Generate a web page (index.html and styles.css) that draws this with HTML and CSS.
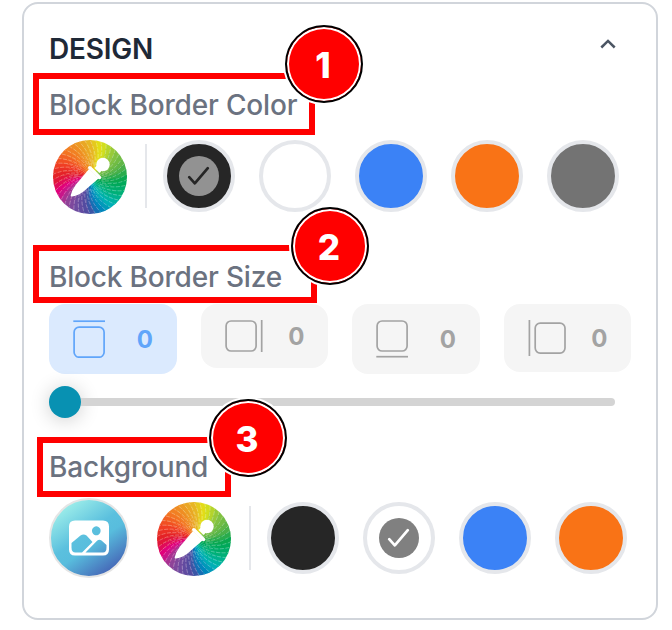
FILE: index.html
```html
<!DOCTYPE html>
<html lang="en">
<head>
<meta charset="utf-8">
<title>Design</title>
<link rel="stylesheet" href="styles.css">
</head>
<body>
<svg class="defs" aria-hidden="true">
  <symbol id="pipette" viewBox="0 0 74 74">
    <g fill="#fff">
      <circle cx="50" cy="24.500" r="6.700"/>
      <path d="M44 25.500L49 30.500L46.500 33L41.500 28Z"/>
      <path d="M36.800 27.800L46.500 37.500" stroke="#fff" stroke-width="3.500" stroke-linecap="round"/>
      <path d="M36 29L45.500 38.500L30.500 51.500Q24.500 56 18.600 56.600Q17.400 56.600 17.700 55.300Q19 49.500 23 44.500Z"/>
    </g>
  </symbol>
  <symbol id="check" viewBox="0 0 40 40">
    <path d="M10.200 21.200L15.800 27.300L28.800 12.200" fill="none" stroke="currentColor" stroke-width="2.700" stroke-linecap="round" stroke-linejoin="round"/>
  </symbol>
</svg>

<main class="card">
  <header class="header">
    <h2 class="title">DESIGN</h2>
    <svg class="chevron" viewBox="0 0 16 10"><path d="M1.300 8.500L8 1.900L14.700 8.500" fill="none" stroke="#4b5563" stroke-width="2.500"/></svg>
  </header>

  <div class="label label-color">Block Border Color</div>
  <div class="row row-color">
    <svg class="wheel" viewBox="0 0 74 74"><g class="rays"></g><use href="#pipette"/></svg>
    <span class="divider"></span>
    <div class="swatches">
      <span class="swatch black"><svg class="tick tick-dark"><use href="#check"/></svg></span>
      <span class="swatch white"></span>
      <span class="swatch blue"></span>
      <span class="swatch orange"></span>
      <span class="swatch gray"></span>
    </div>
  </div>

  <div class="label label-size">Block Border Size</div>
  <div class="tiles">
    <div class="tile active">
      <svg width="32" height="38" viewBox="0 0 32 38" fill="none" stroke="currentColor" stroke-width="1.700"><path d="M.3 1.200H32"/><rect x="1.100" y="7.200" width="30" height="30" rx="5"/></svg>
      <span>0</span>
    </div>
    <div class="tile">
      <svg width="38" height="32" viewBox="0 0 38 32" fill="none" stroke="currentColor" stroke-width="1.700"><path d="M36.700 0V32"/><rect x="1.100" y="1" width="30" height="30" rx="5"/></svg>
      <span>0</span>
    </div>
    <div class="tile">
      <svg width="32" height="38" viewBox="0 0 32 38" fill="none" stroke="currentColor" stroke-width="1.700"><path d="M.3 36.700H32"/><rect x="1.100" y="1" width="30" height="30" rx="5"/></svg>
      <span>0</span>
    </div>
    <div class="tile">
      <svg width="38" height="36" viewBox="0 0 38 36" fill="none" stroke="currentColor" stroke-width="1.700"><path d="M1.400 0V36"/><rect x="7.200" y="3.100" width="29.800" height="30" rx="5"/></svg>
      <span>0</span>
    </div>
  </div>

  <div class="slider"><span class="thumb"></span><span class="track"></span></div>

  <div class="label label-bg">Background</div>
  <div class="row row-bg">
    <span class="image-button">
      <svg width="40" height="36" viewBox="0 0 40 36">
        <path fill="#fff" fill-rule="evenodd" d="M6 .5H34Q40 .5 40 6.500V29.500Q40 35.500 34 35.500H6Q0 35.500 0 29.500V6.500Q0 .5 6 .5ZM27.300 6.300A4.300 4.500 0 1 0 27.310 6.300ZM2.500 23V27.500Q2.500 32.500 6.500 32.500H13L23.500 22L17.500 15.500Q14.500 13.300 11.500 15.500ZM16.500 32.500H34Q37.500 32.500 37.500 27.500V25L32.500 20.500Q30.300 19 28.300 20.500Z"/>
      </svg>
    </span>
    <svg class="wheel wheel-bg" viewBox="0 0 74 74"><g class="rays"></g><use href="#pipette"/></svg>
    <span class="divider"></span>
    <div class="swatches">
      <span class="swatch black"></span>
      <span class="swatch white"><svg class="tick tick-light"><use href="#check"/></svg></span>
      <span class="swatch blue"></span>
      <span class="swatch orange"></span>
    </div>
  </div>
</main>

<div class="frame frame-1"></div>
<div class="frame frame-2"></div>
<div class="frame frame-3"></div>
<div class="badge badge-1">1</div>
<div class="badge badge-2">2</div>
<div class="badge badge-3">3</div>
<script src="wheel.js"></script>
</body>
</html>
```
FILE: styles.css
```css
* { box-sizing: border-box; }
body {
  margin: 0;
  height: 630px;
  padding: 2px 14px 10px 22px;
  position: relative;
  overflow: hidden;
  background: #fff;
  font-family: Inter, "Liberation Sans", sans-serif;
}
.defs { position: absolute; width: 0; height: 0; }
.card {
  height: 618px;
  border: 2px solid #d1d5db;
  border-radius: 16px;
  padding: 24px 25px 0;
}
.header { display: flex; align-items: center; justify-content: space-between; height: 40px; }
.title { margin: 0; padding-top: 2px; font-size: 28px; line-height: 40px; font-weight: 600; letter-spacing: -.2px; color: #1f2937; }
.chevron { width: 16px; height: 10px; margin: 0 15px 9px 0; }
.label { height: 40px; font-size: 28px; line-height: 42px; font-weight: 500; letter-spacing: -.18px; color: #6b7280; white-space: nowrap; }
.label-color { margin-top: 16px; }
.label-size { margin-top: 42px; }
.label-bg { margin-top: 28px; }
.row { display: flex; align-items: center; }
.row-color { height: 76px; margin-top: 14px; padding-left: 4px; }
.row-bg { height: 80px; margin-top: 12px; }
.wheel { flex: none; width: 74px; height: 74px; margin-top: 2px; border-radius: 50%; }
.wheel-bg { margin-left: 28px; }
.divider { flex: none; width: 2px; height: 64px; margin: 0 16px 0 18px; background: #e5e7eb; }
.swatches { display: flex; gap: 24px; }
.swatch {
  flex: none;
  display: flex;
  align-items: center;
  justify-content: center;
  width: 72px;
  height: 72px;
  border: 4px solid #e5e7eb;
  border-radius: 50%;
}
.black { background-color: #262626; }
.white { background-color: #fff; }
.blue { background-color: #3b82f6; }
.orange { background-color: #f97316; }
.gray { background-color: #737373; }
.tick { width: 40px; height: 40px; border-radius: 50%; }
.tick-dark { background: #929292; color: #262626; }
.tick-light { background: #808080; color: #fff; }
.tiles { display: flex; align-items: flex-start; gap: 24px; margin-top: 8px; width: 582px; }
.tile {
  display: flex;
  flex: 1;
  align-items: center;
  justify-content: space-between;
  padding: 16px 24px;
  border-radius: 16px;
  background: #f5f5f5;
  color: #a3a3a3;
  font-size: 24px;
  line-height: 30px;
  font-weight: 700;
}
.tile span { height: 28px; letter-spacing: -.5px; }
.active { background: #dbeafe; color: #60a5fa; }
.slider { display: flex; align-items: center; width: 566px; height: 32px; margin-top: 12px; }
.thumb { flex: none; width: 32px; height: 32px; border-radius: 50%; background: #0891b2; box-shadow: 0 2px 20px rgba(0, 0, 0, .2); }
.track { flex: 1; height: 8px; border-radius: 0 4px 4px 0; background: #d4d4d4; }
.image-button {
  flex: none;
  display: flex;
  align-items: center;
  justify-content: center;
  width: 80px;
  height: 80px;
  border: 2px solid #e5e5e5;
  border-radius: 50%;
  background: linear-gradient(145deg, #a5f3eb 8%, #5bc0de 45%, #58bddd 57%, #4460b4 90%);
}
.frame { position: absolute; border: 6px solid #f00; }
.frame-1 { left: 33px; top: 73px; width: 282px; height: 62px; }
.frame-2 { left: 33px; top: 245px; width: 284px; height: 58px; }
.frame-3 { left: 37px; top: 437px; width: 194px; height: 60px; }
.badge {
  position: absolute;
  width: 78px;
  height: 78px;
  border: 2px solid #000;
  border-radius: 50%;
  background: #f00;
  box-shadow: inset 0 0 0 2px #fff, 0 0 0 2px #fff;
  color: #fff;
  font-size: 35px;
  font-weight: 800;
  line-height: 76px;
  text-align: center;
  padding-right: 2px;
}
.badge-1 { left: 285px; top: 25px; }
.badge-2 { left: 291px; top: 207px; }
.badge-3 { left: 209px; top: 399px; }
```
FILE: wheel.js
```js
// Clockwise hue stops, starting at twelve o'clock.
const stops = [
  [0, 232, 178, 36], [22, 226, 228, 20], [48, 140, 198, 63], [75, 86, 178, 72],
  [98, 0, 166, 80], [122, 0, 176, 120], [145, 0, 180, 180], [168, 0, 125, 190],
  [185, 75, 75, 160], [210, 115, 75, 160], [228, 150, 65, 150], [248, 224, 0, 130],
  [272, 225, 28, 40], [292, 240, 60, 36], [318, 243, 115, 34], [342, 238, 150, 36],
  [360, 232, 178, 36]
];
const colorAt = a => {
  let i = 0;
  while (stops[i + 1][0] < a) i++;
  const p = stops[i], q = stops[i + 1], t = (a - p[0]) / (q[0] - p[0]);
  return 'rgb(' + [1, 2, 3].map(k => Math.round(p[k] + (q[k] - p[k]) * t)).join() + ')';
};
const at = (deg, r) => {
  const a = deg * Math.PI / 180;
  return (37 + r * Math.sin(a)).toFixed(2) + ' ' + (37 - r * Math.cos(a)).toFixed(2);
};
const count = 42, step = 360 / count, twist = 22;
let wedges = '', lines = '';
for (let i = 0; i < count; i++) {
  const a = i * step, b = a + step + 1;
  wedges += `<path fill="${colorAt((a + 10) % 360)}" d="M37 37Q${at(a + twist, 20)} ${at(a, 38)}L${at(b, 38)}Q${at(b + twist, 20)} 37 37Z"/>`;
  lines += `<path d="M${at(a + twist, 12)}Q${at(a + twist * .8, 24)} ${at(a, 37)}" stroke-dashoffset="${i % 3 * 2}"/>`;
}
document.querySelectorAll('.rays').forEach(g => {
  g.innerHTML = wedges + '<g fill="none" stroke="#fff" stroke-opacity=".42" stroke-width=".7" stroke-dasharray="4 1.5">' + lines + '</g>';
});
```
